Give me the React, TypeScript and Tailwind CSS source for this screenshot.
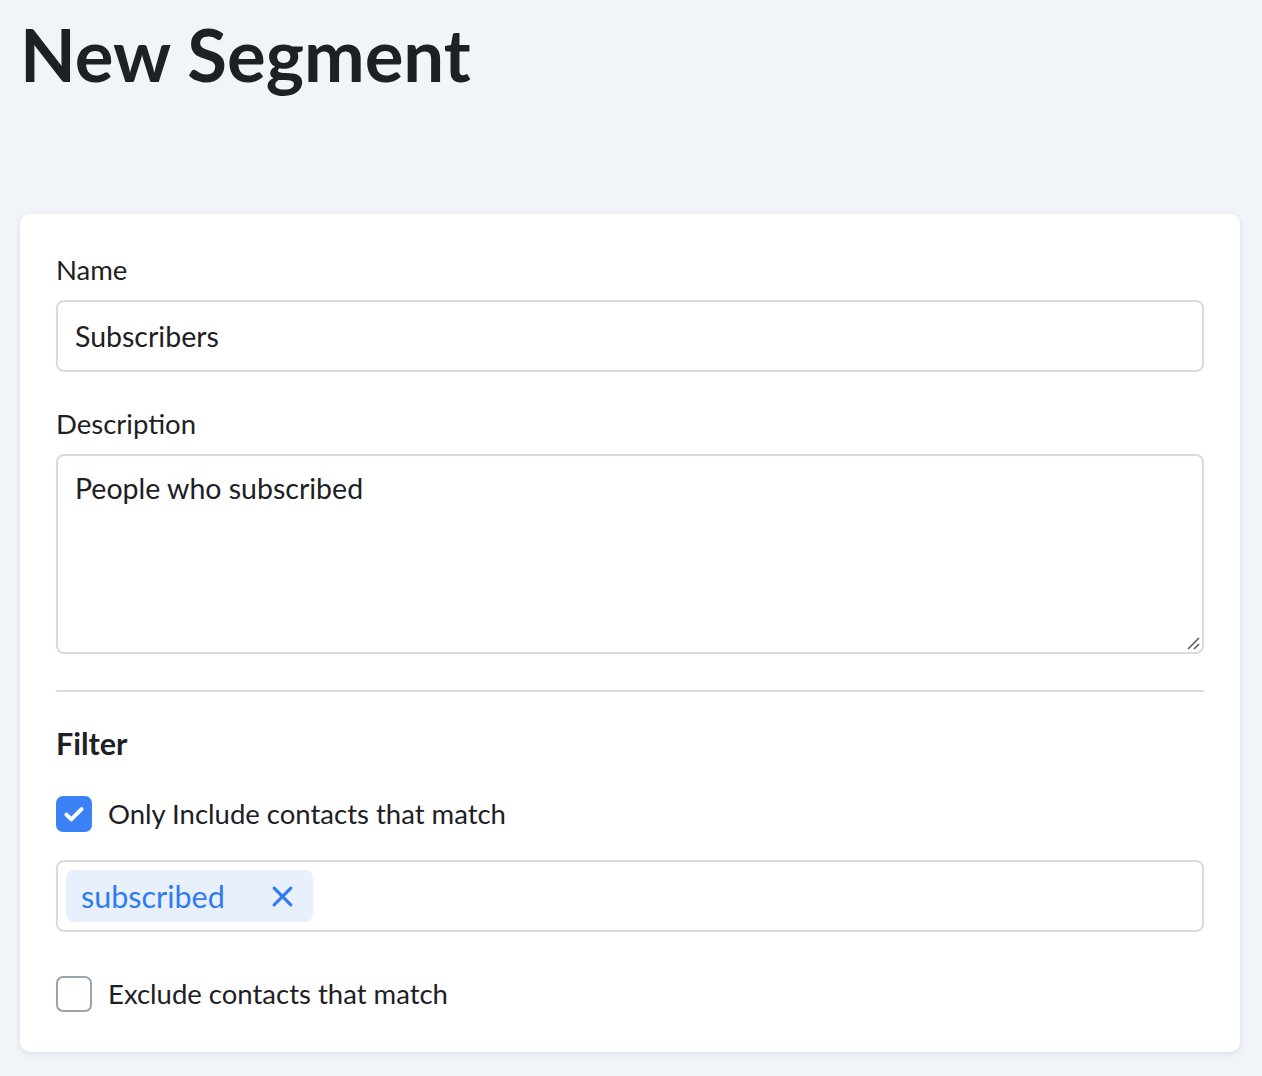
import React from "react";

export default function App() {
  return (
    <div className="min-h-[1076px] bg-[#f1f4f9] pl-5 pr-[22px] pt-[14px] pb-6 text-[#1d2025]" style={{ fontFamily: "Lato, 'Noto Sans', sans-serif" }}>
      <h1 className="text-[72.5px] font-bold leading-[80px]">New Segment</h1>
      <div className="mt-[120px] rounded-[10px] bg-white px-9 pt-[40px] pb-[40px] shadow-[0_2px_6px_rgba(30,40,60,0.10)]">
        <label className="block text-[27.5px] leading-[32px]">Name</label>
        <div className="mt-[14px] flex h-[72px] items-center rounded-[8px] border-2 border-[#d6dbe4] px-[17px] text-[28.5px] leading-[36px]">Subscribers</div>
        <label className="mt-[36px] block text-[27.5px] leading-[32px]">Description</label>
        <div className="relative mt-[14px] h-[200px] rounded-[8px] border-2 border-[#d6dbe4] px-[17px] pt-[14px] text-[28.5px] leading-[36px]">
          People who subscribed
          <svg className="absolute right-[2px] bottom-[2px]" width="14" height="14" viewBox="0 0 14 14">
            <path d="M2 13 L13 2 M8 13 L13 8" stroke="#555" strokeWidth="1.5" />
          </svg>
        </div>
        <div className="mt-[36px] h-[2px] bg-[#d9dde5]" />
        <h2 className="mt-[33px] text-[30.5px] font-bold leading-[36px]">Filter</h2>
        <div className="mt-[35px] flex items-center gap-4">
          <div className="flex h-9 w-9 items-center justify-center rounded-[7px] bg-[#3b82f6]">
            <svg width="26" height="26" viewBox="0 0 24 24" fill="none" stroke="white" strokeWidth="3.6" strokeLinecap="round" strokeLinejoin="round">
              <path d="M5 12.5l4.5 4.5L19 7.5" />
            </svg>
          </div>
          <span className="text-[27.5px] leading-[36px]">Only Include contacts that match</span>
        </div>
        <div className="mt-[28px] flex h-[72px] items-center rounded-[8px] border-2 border-[#d6dbe4] px-2">
          <div className="flex h-[52px] items-center gap-[46px] rounded-[8px] bg-[#e8f0fd] pl-[15px] pr-[19px] text-[30.5px] leading-[36px] text-[#2f7cf0]">
            <span>subscribed</span>
            <svg width="23" height="23" viewBox="0 0 22 22" stroke="#2f7cf0" strokeWidth="3" strokeLinecap="round">
              <path d="M3 3 L19 19 M19 3 L3 19" />
            </svg>
          </div>
        </div>
        <div className="mt-[44px] flex items-center gap-4">
          <div className="h-9 w-9 rounded-[7px] border-2 border-[#9aa3b0] bg-white" />
          <span className="text-[27.5px] leading-[36px]">Exclude contacts that match</span>
        </div>
      </div>
    </div>
  );
}
